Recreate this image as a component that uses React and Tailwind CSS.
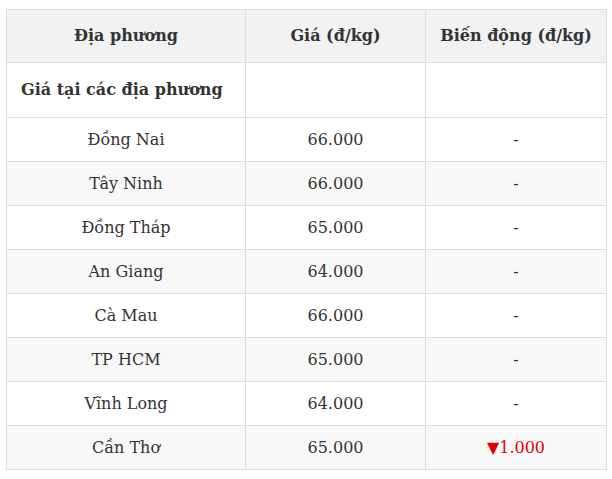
export default function App() {
  const rows = [
    ["Đồng Nai", "66.000", "-"],
    ["Tây Ninh", "66.000", "-"],
    ["Đồng Tháp", "65.000", "-"],
    ["An Giang", "64.000", "-"],
    ["Cà Mau", "66.000", "-"],
    ["TP HCM", "65.000", "-"],
    ["Vĩnh Long", "64.000", "-"],
    ["Cần Thơ", "65.000", "down"],
  ];
  return (
    <div className="w-[612px] h-[479px] bg-white pt-[9px] pl-[6px] text-[#333] font-['DejaVu_Serif',serif]">
      <table className="w-[600px] border-collapse table-fixed text-[16px]">
        <colgroup>
          <col className="w-[239px]" />
          <col className="w-[180px]" />
          <col className="w-[181px]" />
        </colgroup>
        <thead>
          <tr className="h-[53px] bg-[#f2f2f2]">
            <th className="border border-[#dcdcdc] font-bold text-center">Địa phương</th>
            <th className="border border-[#dcdcdc] font-bold text-center">Giá (đ/kg)</th>
            <th className="border border-[#dcdcdc] font-bold text-center">Biến động (đ/kg)</th>
          </tr>
        </thead>
        <tbody>
          <tr className="h-[55px] bg-white">
            <td className="border border-[#dcdcdc] font-bold text-left pl-[14px]">Giá tại các địa phương</td>
            <td className="border border-[#dcdcdc]"></td>
            <td className="border border-[#dcdcdc]"></td>
          </tr>
          {rows.map((r, i) => (
            <tr key={r[0]} className={`h-[44px] ${i % 2 === 1 ? "bg-[#f8f8f8]" : "bg-white"}`}>
              <td className="border border-[#dcdcdc] text-center">{r[0]}</td>
              <td className="border border-[#dcdcdc] text-center">{r[1]}</td>
              <td className="border border-[#dcdcdc] text-center">
                {r[2] === "down" ? (
                  <span className="text-[#e00000]">▼1.000</span>
                ) : (
                  r[2]
                )}
              </td>
            </tr>
          ))}
        </tbody>
      </table>
    </div>
  );
}
